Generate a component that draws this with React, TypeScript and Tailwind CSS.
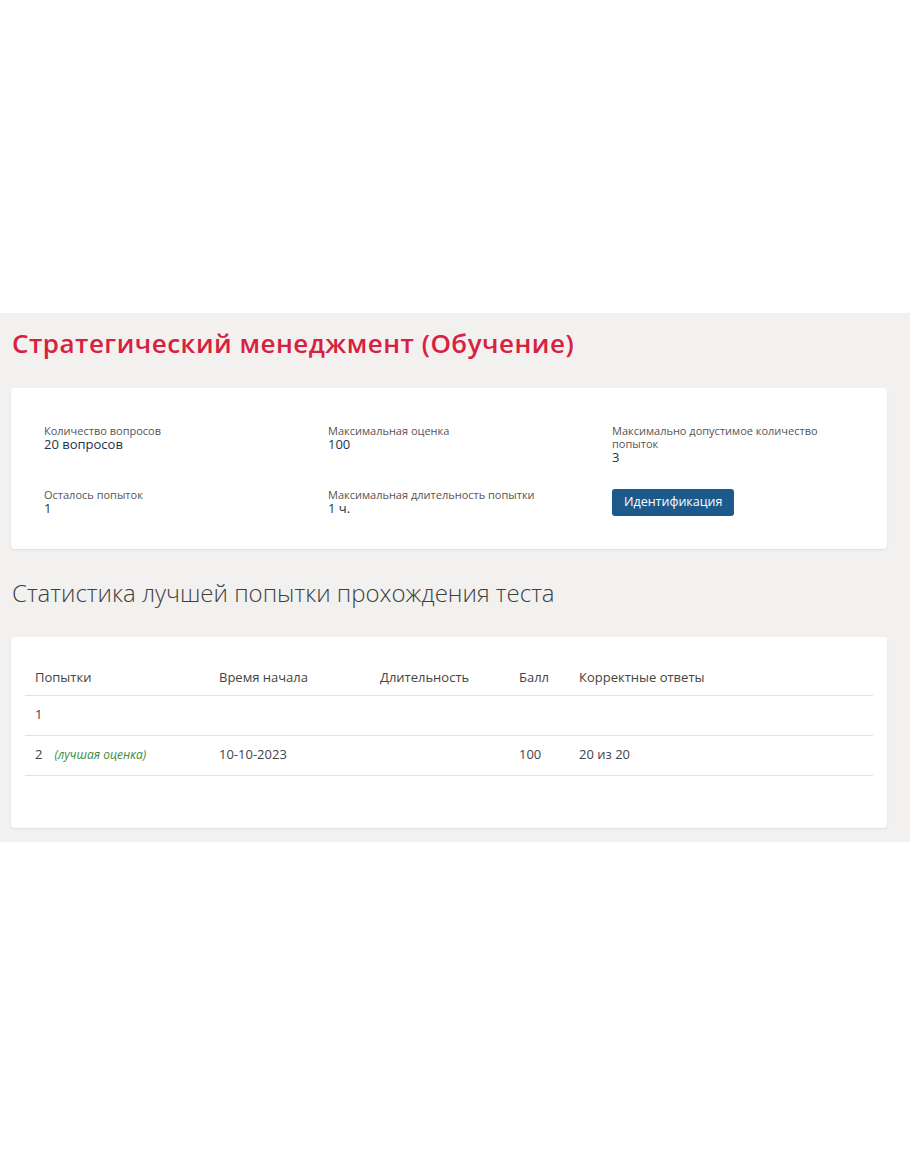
const info = [
  { label: "Количество вопросов", value: "20 вопросов" },
  { label: "Максимальная оценка", value: "100" },
  { label: "Максимально допустимое количество попыток", value: "3" },
  { label: "Осталось попыток", value: "1" },
  { label: "Максимальная длительность попытки", value: "1 ч." },
];

const rows = [
  { n: "1", best: false, start: "", duration: "", score: "", correct: "" },
  { n: "2", best: true, start: "10-10-2023", duration: "", score: "100", correct: "20 из 20" },
];

function InfoItem({ label, value }: { label: string; value: string }) {
  return (
    <div className="pr-6">
      <div className="text-[11px] leading-[13px] text-[#555]">{label}</div>
      <div className="text-[13px] leading-[15px] text-[#22344d]">{value}</div>
    </div>
  );
}

export default function App() {
  return (
    <div className="min-h-[1155px] bg-white font-['Open_Sans',sans-serif]">
      <div className="h-[313px]" />

      <div className="bg-[#f2f1ef] px-[11px] pb-[14px] pt-[14px]">
        {/* Title */}
        <h1 className="pl-px text-[26px] font-semibold leading-[32px] tracking-[0.5px] text-[#d8213f]">
          Стратегический менеджмент (Обучение)
        </h1>

        {/* Test info */}
        <div className="mt-[29px] w-[876px] rounded-sm bg-white px-[33px] pb-[33px] pt-[36px] shadow-[0_1px_2px_rgba(0,0,0,0.08)]">
          <div className="grid grid-cols-[284px_284px_1fr] gap-y-[23px]">
            {info.slice(0, 3).map((i) => (
              <InfoItem key={i.label} {...i} />
            ))}
            {info.slice(3).map((i) => (
              <InfoItem key={i.label} {...i} />
            ))}
            <div>
              <button className="h-[27px] rounded-[3px] bg-[#1d5a8c] px-[12px] text-[12.5px] text-white">
                Идентификация
              </button>
            </div>
          </div>
        </div>

        {/* Stats heading */}
        <h2 className="mt-[28px] pl-px text-[24px] font-light leading-[32px] text-[#3f3f3f]">
          Статистика лучшей попытки прохождения теста
        </h2>

        {/* Stats table */}
        <div className="mt-[28px] w-[876px] rounded-sm bg-white px-[14px] pb-[52px] pt-[24px] shadow-[0_1px_2px_rgba(0,0,0,0.08)]">
          <table className="w-full table-fixed border-collapse text-left text-[13px] text-[#444]">
            <colgroup>
              <col className="w-[194px]" />
              <col className="w-[161px]" />
              <col className="w-[139px]" />
              <col className="w-[60px]" />
              <col />
            </colgroup>
            <thead>
              <tr className="border-b border-[#e2e2e2]">
                <th className="h-[34px] pl-[10px] align-middle font-normal">Попытки</th>
                <th className="font-normal">Время начала</th>
                <th className="font-normal">Длительность</th>
                <th className="font-normal">Балл</th>
                <th className="font-normal">Корректные ответы</th>
              </tr>
            </thead>
            <tbody>
              {rows.map((r) => (
                <tr key={r.n} className="border-b border-[#e2e2e2]">
                  <td className="h-[40px] pl-[10px]">
                    {r.n}
                    {r.best && (
                      <span className="ml-[12px] text-[12px] italic text-[#3b8a3e]">(лучшая оценка)</span>
                    )}
                  </td>
                  <td>{r.start}</td>
                  <td>{r.duration}</td>
                  <td>{r.score}</td>
                  <td>{r.correct}</td>
                </tr>
              ))}
            </tbody>
          </table>
        </div>
      </div>
    </div>
  );
}
